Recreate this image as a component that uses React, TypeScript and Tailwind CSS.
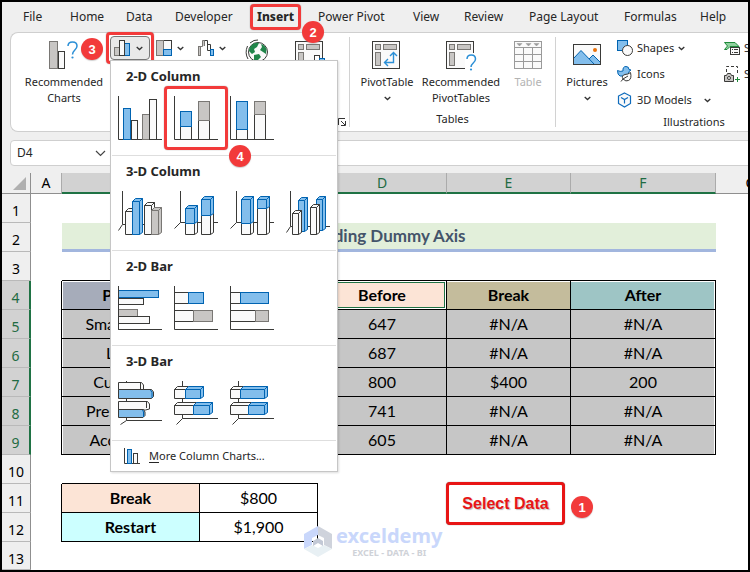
import type { ReactNode } from 'react';
import clsx from 'clsx';

const BLUE = '#83beec';
const BLUE_LINE = '#0063b1';
const GRAY = '#c8c6c4';
const GRAY_LINE = '#797774';
const WHITE = '#fafafa';
const DARK = '#3a3a38';

type Tone = 'blue' | 'gray' | 'white';

const tones: Record<Tone, { fill: string; stroke: string }> = {
  blue: { fill: BLUE, stroke: BLUE_LINE },
  gray: { fill: GRAY, stroke: GRAY_LINE },
  white: { fill: WHITE, stroke: DARK },
};

interface BoxProps {
  x: number;
  y: number;
  w: number;
  h: number;
  tone: Tone;
}

function Box({ x, y, w, h, tone }: BoxProps) {
  return <rect x={x + 0.5} y={y + 0.5} width={w} height={h} {...tones[tone]} />;
}

// Box with a small top and right face
function Box3D({ x, y, w, h, tone, top = true, side = true }: BoxProps & { top?: boolean; side?: boolean }) {
  const l = x + 0.5;
  const t = y + 0.5;
  const r = l + w;
  const b = t + h;
  return (
    <g {...tones[tone]} strokeLinejoin="round">
      <rect x={l} y={t} width={w} height={h} />
      {top && <path d={`M${l} ${t}l3 -3H${r + 3}l-3 3z`} />}
      {side && <path d={`M${r} ${t}l3 -3V${b - 2}l-3 2z`} />}
    </g>
  );
}

function ChartIcon({ axis, children }: { axis: string; children: ReactNode }) {
  return (
    <svg width="44" height="44" viewBox="0 0 44 44" fill="none" stroke={DARK} className="block">
      <path d={axis} />
      {children}
    </svg>
  );
}

const FLAT = 'M.5 0V43.5H44';

const sections: { title: string; icons: { name: string; icon: ReactNode }[] }[] = [
  {
    title: '2-D Column',
    icons: [
      {
        name: 'Clustered Column',
        icon: (
          <ChartIcon axis={FLAT}>
            <Box x={13} y={24} w={6} h={19} tone="white" />
            <Box x={5} y={12} w={7} h={31} tone="blue" />
            <Box x={24} y={18} w={7} h={25} tone="gray" />
            <Box x={31} y={3} w={7} h={40} tone="white" />
          </ChartIcon>
        ),
      },
      {
        name: 'Stacked Column',
        icon: (
          <ChartIcon axis={FLAT}>
            <Box x={6} y={30} w={11} h={13} tone="white" />
            <Box x={6} y={15} w={11} h={15} tone="blue" />
            <Box x={24} y={24} w={11} h={19} tone="white" />
            <Box x={24} y={5} w={11} h={19} tone="gray" />
          </ChartIcon>
        ),
      },
      {
        name: '100% Stacked Column',
        icon: (
          <ChartIcon axis={FLAT}>
            <Box x={6} y={33} w={11} h={10} tone="white" />
            <Box x={6} y={5} w={11} h={28} tone="blue" />
            <Box x={24} y={18} w={11} h={25} tone="white" />
            <Box x={24} y={5} w={11} h={13} tone="gray" />
          </ChartIcon>
        ),
      },
    ],
  },
  {
    title: '3-D Column',
    icons: [
      {
        name: '3-D Clustered Column',
        icon: (
          <ChartIcon axis="M4.5 0V33.5H44M4.5 33.5L.5 39.5">
            <Box3D x={7} y={20} w={7} h={23} tone="white" />
            <Box3D x={14} y={10} w={7} h={33} tone="blue" />
            <Box3D x={26} y={14} w={7} h={29} tone="white" />
            <Box3D x={33} y={19} w={7} h={24} tone="gray" />
          </ChartIcon>
        ),
      },
      {
        name: '3-D Stacked Column',
        icon: (
          <ChartIcon axis="M6.5 0V31.5H44M6.5 31.5L.5 37.5">
            <Box3D x={11} y={32} w={9} h={11} tone="white" top={false} />
            <Box3D x={11} y={17} w={9} h={15} tone="blue" />
            <Box3D x={27} y={24} w={9} h={19} tone="white" top={false} />
            <Box3D x={27} y={8} w={9} h={16} tone="blue" />
          </ChartIcon>
        ),
      },
      {
        name: '3-D 100% Stacked Column',
        icon: (
          <ChartIcon axis="M6.5 0V31.5H44M6.5 31.5L.5 37.5">
            <Box3D x={11} y={32} w={9} h={11} tone="white" top={false} />
            <Box3D x={11} y={8} w={9} h={24} tone="blue" />
            <Box3D x={27} y={17} w={9} h={26} tone="white" top={false} />
            <Box3D x={27} y={8} w={9} h={9} tone="blue" />
          </ChartIcon>
        ),
      },
      {
        name: '3-D Column',
        icon: (
          <ChartIcon axis="M4.5 0V35.5H44M4.5 35.5L.5 41.5">
            <Box3D x={12} y={9} w={6} h={31} tone="blue" />
            <Box3D x={6} y={22} w={6} h={21} tone="white" />
            <Box3D x={30} y={8} w={6} h={31} tone="blue" />
            <Box3D x={24} y={16} w={6} h={27} tone="white" />
          </ChartIcon>
        ),
      },
    ],
  },
  {
    title: '2-D Bar',
    icons: [
      {
        name: 'Clustered Bar',
        icon: (
          <ChartIcon axis={FLAT}>
            <Box x={0} y={12} w={25} h={6} tone="white" />
            <Box x={0} y={4} w={40} h={7} tone="blue" />
            <Box x={0} y={23} w={19} h={7} tone="gray" />
            <Box x={0} y={30} w={31} h={7} tone="white" />
            <path d={FLAT} />
          </ChartIcon>
        ),
      },
      {
        name: 'Stacked Bar',
        icon: (
          <ChartIcon axis={FLAT}>
            <Box x={0} y={6} w={14} h={11} tone="white" />
            <Box x={14} y={6} w={15} h={11} tone="blue" />
            <Box x={0} y={24} w={19} h={11} tone="white" />
            <Box x={19} y={24} w={19} h={11} tone="gray" />
          </ChartIcon>
        ),
      },
      {
        name: '100% Stacked Bar',
        icon: (
          <ChartIcon axis={FLAT}>
            <Box x={0} y={6} w={10} h={11} tone="white" />
            <Box x={10} y={6} w={28} h={11} tone="blue" />
            <Box x={0} y={24} w={25} h={11} tone="white" />
            <Box x={25} y={24} w={13} h={11} tone="gray" />
          </ChartIcon>
        ),
      },
    ],
  },
  {
    title: '3-D Bar',
    icons: [
      {
        name: '3-D Clustered Bar',
        icon: (
          <ChartIcon axis="M8.5 0V39.5H44M8.5 39.5L2.5 43.5">
            <path d="M.5 1.5H23.5L25.5 4V8.500H.5z" fill={WHITE} />
            <path d="M22.5 1.5V8" />
            <path d="M.5 8.5H33.5L35.5 11V15.5L33.5 17.5H.5z" fill={BLUE} />
            <path d="M32.5 9L34 11.5V17" stroke={BLUE_LINE} />
            <path d="M.5 20.5H29.5L31.5 23V28L27.5 29H.5z" fill={WHITE} />
            <path d="M28.5 21V27" />
            <path d="M.5 28.5H25.5L27 31V34.5L25 36.5H.5z" fill={BLUE} />
            <path d="M24.5 29L25.5 31V36" stroke={BLUE_LINE} />
          </ChartIcon>
        ),
      },
      {
        name: '3-D Stacked Bar',
        icon: (
          <ChartIcon axis="M8.5 0V37.5H44M8.5 37.5L2.5 43.5">
            <Box3D x={0} y={8} w={11} h={9} tone="white" side={false} />
            <Box3D x={11} y={8} w={15} h={9} tone="blue" />
            <Box3D x={0} y={24} w={19} h={9} tone="white" side={false} />
            <Box3D x={19} y={24} w={16} h={9} tone="blue" />
          </ChartIcon>
        ),
      },
      {
        name: '3-D 100% Stacked Bar',
        icon: (
          <ChartIcon axis="M8.5 0V37.5H44M8.5 37.5L2.5 43.5">
            <Box3D x={0} y={8} w={10} h={9} tone="white" side={false} />
            <Box3D x={10} y={8} w={24} h={9} tone="blue" />
            <Box3D x={0} y={24} w={18} h={9} tone="white" side={false} />
            <Box3D x={18} y={24} w={16} h={9} tone="blue" />
          </ChartIcon>
        ),
      },
    ],
  },
];

function Chevron() {
  return (
    <svg width="7" height="5" viewBox="0 0 7 5" fill="none" stroke="#333" strokeWidth="1.3" className="shrink-0">
      <path d="M.7 1L3.5 3.6L6.3 1" />
    </svg>
  );
}

function Badge({ children, className }: { children: ReactNode; className: string }) {
  return (
    <span
      className={clsx(
        'absolute z-20 flex size-[22px] items-center justify-center rounded-full bg-[#f23a3a] font-["Liberation_Sans",sans-serif] text-[13px] leading-none font-bold text-white shadow-[0_1px_1px_#8886]',
        className,
      )}
    >
      {children}
    </span>
  );
}

function Frame({ className }: { className: string }) {
  return (
    <span
      className={clsx(
        'pointer-events-none absolute z-10 rounded-sm border-3 border-[#f23a3a] shadow-[0_0_1px_#666]',
        className,
      )}
    />
  );
}

function PivotIcon({ children }: { children: ReactNode }) {
  return (
    <svg width="31" height="30" viewBox="0 0 31 30" fill="none">
      <rect x=".5" y=".5" width="27" height="27" fill={WHITE} stroke={DARK} />
      <g fill={GRAY} stroke={GRAY_LINE}>
        <rect x="3.5" y="3.5" width="5" height="5" />
        <rect x="11.5" y="3.5" width="13" height="5" />
        <rect x="3.5" y="11.5" width="5" height="13" />
      </g>
      {children}
    </svg>
  );
}

interface BigButtonProps {
  icon: ReactNode;
  lines: string[];
  chevron?: boolean;
  disabled?: boolean;
  className: string;
}

function BigButton({ icon, lines, chevron, disabled, className }: BigButtonProps) {
  return (
    <button
      type="button"
      disabled={disabled}
      className={clsx('flex shrink-0 flex-col items-center pt-2 text-[11px] leading-4 disabled:text-[#b3b3b3]', className)}
    >
      <span className="flex h-[33px] items-start">{icon}</span>
      {lines.map((line) => (
        <span key={line} className="whitespace-nowrap">
          {line}
        </span>
      ))}
      {chevron && (
        <span className="flex h-4 items-center">
          <Chevron />
        </span>
      )}
    </button>
  );
}

function SmallButton({ icon, label, chevron }: { icon: ReactNode; label: string; chevron?: string }) {
  return (
    <button type="button" className="flex h-[26px] items-center gap-1 text-[11px] whitespace-nowrap">
      {icon}
      {label}
      {chevron && (
        <span className={chevron}>
          <Chevron />
        </span>
      )}
    </button>
  );
}

function ChartMenu() {
  return (
    <div
      role="menu"
      className="absolute top-full left-0 z-10 w-[228px] border border-[#c6c6c6] bg-white px-px text-[#262626] shadow-[1px_1px_2px_#0002]"
    >
      {sections.map((section) => (
        <section key={section.title} className="border-b border-[#dedede] px-1.5 pt-[7px] pb-[15px]">
          <h2 className="mb-3 px-2 text-[13px] leading-4 font-bold">{section.title}</h2>
          <div className="flex gap-3">
            {section.icons.map(({ name, icon }) => (
              <button key={name} type="button" aria-label={name} className="relative">
                {icon}
                {name === 'Stacked Column' && (
                  <>
                    <Frame className="-inset-[10px]" />
                    <Badge className="top-[49px] left-[55px]">4</Badge>
                  </>
                )}
              </button>
            ))}
          </div>
        </section>
      ))}
      <button type="button" className="flex h-[30px] w-full items-center gap-2 px-3 text-[11px]">
        <svg width="17" height="16" viewBox="0 0 17 16" fill="none" stroke={DARK}>
          <path d="M.5 0V15.5H16" />
          <Box x={9} y={5} w={4} h={10} tone="white" />
          <Box x={3} y={1} w={4} h={14} tone="blue" />
        </svg>
        <span>
          <span className="underline underline-offset-2">M</span>ore Column Charts...
        </span>
      </button>
    </div>
  );
}

const tabs = [
  'File',
  'Home',
  'Data',
  'Developer',
  'Insert',
  'Power Pivot',
  'View',
  'Review',
  'Page Layout',
  'Formulas',
  'Help',
];

function TabBar() {
  return (
    <nav className="grid h-[30px] grid-cols-[47fr_56fr_49fr_82fr_61fr_95fr_51fr_65fr_95fr_76fr_48fr] items-center pl-[21px] text-[12px]">
      {tabs.map((tab) => (
        <div key={tab} className="flex">
          <button
            type="button"
            className={clsx('relative leading-4 whitespace-nowrap', tab === 'Insert' && 'font-extrabold')}
          >
            {tab}
            {tab === 'Insert' && (
              <>
                <Frame className="-inset-x-[7px] -inset-y-[5px]" />
                <Badge className="top-3 -right-[30px]">2</Badge>
              </>
            )}
          </button>
        </div>
      ))}
    </nav>
  );
}

function Ribbon() {
  return (
    <div className="ml-2 flex h-[100px] rounded-l-lg border border-r-0 border-[#cfcfcf] bg-white">
      <div className="relative flex w-[338px] shrink-0 pl-[11px]">
        <BigButton
          className="w-[84px]"
          lines={['Recommended', 'Charts']}
          icon={
            <svg width="30" height="29" viewBox="0 0 30 29" fill="none">
              <Box x={0} y={0} w={8} h={27} tone="gray" />
              <Box x={9} y={10} w={6} h={17} tone="white" />
              <path d="M19 5C19 -.5 28 -.5 28 5C28 9 23.5 9 23.5 13.5" stroke="#2b8fd6" strokeWidth="1.5" />
              <circle cx="23.5" cy="16.5" r="1.1" fill="#2b8fd6" />
            </svg>
          }
        />
        <div className="ml-1 flex items-start pt-[3px]">
          <div className="relative">
            <button
              type="button"
              aria-label="Insert Column or Bar Chart"
              className="flex h-6 w-10 items-center gap-1.5 rounded-sm border border-[#777] bg-[#e9e9e9] pl-[3px]"
            >
              <svg width="16" height="16" viewBox="0 0 16 16">
                <Box x={0} y={7} w={5} h={8} tone="gray" />
                <Box x={10} y={3} w={5} h={12} tone="blue" />
                <Box x={5} y={0} w={5} h={15} tone="white" />
              </svg>
              <Chevron />
            </button>
            <Frame className="-inset-1" />
            <Badge className="top-0.5 -left-[29px]">3</Badge>
            <ChartMenu />
          </div>
          <button
            type="button"
            aria-label="Insert Hierarchy Chart"
            className="flex h-6 w-[42px] items-center gap-[5px] pl-1.5"
          >
            <svg width="16" height="16" viewBox="0 0 16 16">
              <Box x={7} y={0} w={8} h={9} tone="white" />
              <Box x={0} y={0} w={7} h={15} tone="gray" />
              <Box x={7} y={9} w={8} h={6} tone="blue" />
            </svg>
            <Chevron />
          </button>
          <button
            type="button"
            aria-label="Insert Waterfall Chart"
            className="flex h-6 w-[42px] items-center gap-[5px] pl-1.5"
          >
            <svg width="16" height="16" viewBox="0 0 16 16">
              <Box x={0} y={6} w={2} h={9} tone="gray" />
              <path d="M2.5 6.5H4.5V.5H6.5V6" fill={GRAY} stroke={GRAY_LINE} />
              <path d="M6.5 .5H9.5V10.5H12.5V4.5H9.5" fill={WHITE} stroke={DARK} />
              <Box x={12} y={9} w={3} h={6} tone="blue" />
            </svg>
            <Chevron />
          </button>
        </div>
        <button type="button" aria-label="Maps" className="ml-[10px] flex items-start pt-1.5">
          <svg width="28" height="28" viewBox="0 0 28 28" fill="none">
            <circle cx="14" cy="13" r="9.5" fill={WHITE} stroke={DARK} />
            <path d="M9 5Q12 3 15 4L13 8L10 10L11 13L8 15L5 12Q5 8 9 5z" fill="#21854a" />
            <path d="M17 5Q21 6 22.5 10L22 15L19 13L16 11L18 8z" fill="#21854a" />
            <path d="M10 16L15 15L17 18L13 22L10 21z" fill="#21854a" />
            <path d="M6 4Q10 .5 14 1M3.5 7Q.5 14 4 20" stroke={DARK} />
          </svg>
        </button>
        <button type="button" aria-label="PivotChart" className="ml-[23px] flex items-start pt-2">
          <PivotIcon>
            <rect x="19.5" y="14.5" width="5" height="12" fill="#fff" stroke={DARK} />
            <rect x="24.5" y="17.5" width="5" height="9" fill={BLUE} stroke={BLUE_LINE} />
          </PivotIcon>
        </button>
        <button type="button" aria-label="Charts dialog" className="absolute right-[3px] bottom-[5px]">
          <svg width="8" height="8" viewBox="0 0 8 8" fill="none" stroke="#333">
            <path d="M.5 7V.5H7M3 3L7 7M7.5 3V7.5H3" />
          </svg>
        </button>
      </div>

      <div className="my-1 flex w-[207px] shrink-0 flex-col border-x border-[#d2d2d2]">
        <div className="-mt-1 flex h-[81px] gap-0.5 pl-2">
          <BigButton
            className="w-[58px]"
            lines={['PivotTable']}
            chevron
            icon={
              <PivotIcon>
                <path
                  d="M21.5 12V21.5H12.5M18 15L21.5 11.5L25 15M16 18L12.5 21.5L16 25"
                  stroke="#2b8fd6"
                  strokeWidth="1.4"
                />
              </PivotIcon>
            }
          />
          <BigButton
            className="w-[86px]"
            lines={['Recommended', 'PivotTables']}
            icon={
              <PivotIcon>
                <path d="M19 12H29V29H19z" fill="#fff" />
                <path d="M21 18C21 12.5 29.5 12.5 29.5 18C29.5 22 25 22 25 26" stroke="#2b8fd6" strokeWidth="1.5" />
                <circle cx="25" cy="28.5" r="1.1" fill="#2b8fd6" />
              </PivotIcon>
            }
          />
          <BigButton
            className="w-[44px]"
            lines={['Table']}
            disabled
            icon={
              <svg width="28" height="28" viewBox="0 0 28 28" fill="#fafafa" stroke="#9a9a9a">
                <rect x=".5" y=".5" width="27" height="27" />
                <path d="M.5 6.5H27.5M.5 13.5H27.5M.5 20.5H27.5M9.5 6.5V27.5M18.5 6.5V27.5" />
                <path d="M3 2.5H8L5.5 5zM12 2.5H17L14.5 5zM20 2.5H25L22.5 5z" fill="#9a9a9a" strokeWidth=".5" />
              </svg>
            }
          />
        </div>
        <div className="text-center text-[11px] leading-4">Tables</div>
      </div>

      <div className="flex w-[276px] shrink-0 flex-col">
        <div className="flex h-[81px]">
          <BigButton
            className="ml-1.5 w-[50px]"
            lines={['Pictures']}
            chevron
            icon={
              <svg width="28" height="24" viewBox="0 0 28 24" fill="none" className="mt-[3px]">
                <rect x=".5" y=".5" width="27" height="20" fill={WHITE} />
                <path d="M1 14L8 6.5L21.5 20.5H1z" fill={BLUE} />
                <path d="M16 15L20 11L27 18V20.5H21z" fill={BLUE} />
                <path d="M1 14L8 6.5L21.5 20.5M16 15L20 11L27 18" stroke={BLUE_LINE} />
                <rect x=".5" y=".5" width="27" height="20" stroke={DARK} />
                <circle cx="22" cy="6" r="2" fill="#e8710a" />
              </svg>
            }
          />
          <div className="ml-[5px] flex w-[107px] flex-col pt-0.5">
            <SmallButton
              label="Shapes"
              chevron="ml-0"
              icon={
                <svg width="16" height="16" viewBox="0 0 16 16">
                  <rect x=".5" y=".5" width="10" height="10" fill={BLUE} stroke={BLUE_LINE} />
                  <circle cx="10.5" cy="10.5" r="5" fill={WHITE} stroke={DARK} />
                </svg>
              }
            />
            <SmallButton
              label="Icons"
              icon={
                <svg width="16" height="16" viewBox="0 0 16 16">
                  <path
                    d="M.5 4.5Q3 6 6 5Q5.500 .5 9 .5Q12 .5 12 3.5L14 4L12 5.5Q12 9 9 10H3Q.5 9 .5 4.5z"
                    fill={BLUE}
                    stroke={BLUE_LINE}
                  />
                  <path
                    d="M4 15.5L6 13Q4 9.5 8 8.5Q11 8.5 13.5 6.5Q15 13 11.5 14.5Q9 16 6 13L11 10"
                    fill={WHITE}
                    stroke={DARK}
                  />
                </svg>
              }
            />
            <SmallButton
              label="3D Models"
              chevron="ml-2"
              icon={
                <svg width="16" height="16" viewBox="0 0 16 16" fill="none" stroke="#0f6cbd" strokeWidth="1.2">
                  <path d="M7.5 1L13.5 4V11.5L7.5 15L1.5 11.5V4z" fill={WHITE} />
                  <path d="M4 5.5L7.5 7.5L11 5.5M7.5 7.5V11.5" />
                </svg>
              }
            />
          </div>
          <div className="flex flex-col pt-0.5">
            <SmallButton
              label="SmartArt"
              icon={
                <svg width="16" height="16" viewBox="0 0 16 16">
                  <path d="M.5 2.5H11L15 6.5H6L3 9.5H.5L3.5 6z" fill="#8fd19e" stroke="#1f8a3b" />
                  <rect x="6.5" y="7.5" width="9" height="7" fill={WHITE} stroke={DARK} />
                  <path d="M8 9.5H9M10 9.5H14M8 12.5H9M10 12.5H14" stroke={DARK} />
                </svg>
              }
            />
            <SmallButton
              label="Screenshot"
              icon={
                <svg width="16" height="16" viewBox="0 0 16 16">
                  <path d="M2.5 6V.5H13.5V9" fill="none" stroke={DARK} strokeDasharray="3 2" />
                  <path d="M.5 9.5H2.5L3.5 7.5H6.5L7.5 9.5H9.5V15.5H.5z" fill={GRAY} stroke={DARK} />
                  <circle cx="5" cy="12" r="1.5" fill={WHITE} stroke={DARK} />
                  <path d="M11 13.5H16M13.5 11V16" stroke="#1f8a3b" />
                </svg>
              }
            />
          </div>
        </div>
        <div className="text-center text-[11px] leading-4">Illustrations</div>
      </div>
    </div>
  );
}

function FormulaBar() {
  return (
    <div className="mt-2 mb-[7px] ml-2 flex h-[26px] gap-2 text-[12px]">
      <label className="flex w-[105px] items-center rounded-sm border border-[#cfcfcf] bg-white pr-2 pl-1.5">
        <input aria-label="Name Box" defaultValue="D4" className="w-0 grow outline-none" />
        <svg width="11" height="7" viewBox="0 0 11 7" fill="none" stroke="#444" strokeWidth="1.2">
          <path d="M1 1L5.5 5.5L10 1" />
        </svg>
      </label>
      <input aria-label="Formula Bar" className="grow border border-r-0 border-[#cfcfcf] bg-white outline-none" />
    </div>
  );
}

const columns = ['A', 'B', 'C', 'D', 'E', 'F', 'G'];
const selectedColumns = ['B', 'C', 'D', 'E', 'F'];

const header = ['Product', '', 'Before', 'Break', 'After'];
const headerFill = ['bg-[#a6acba]', 'bg-[#c6c6c6]', 'bg-[#fce4d6]', 'bg-[#c4bc9c]', 'bg-[#9ec5c5]'];

const data = [
  ['Smart Phone', '', '647', '#N/A', '#N/A'],
  ['Laptop', '', '687', '#N/A', '#N/A'],
  ['Curved TV', '', '800', '$400', '200'],
  ['Presentation', '', '741', '#N/A', '#N/A'],
  ['Accessories', '', '605', '#N/A', '#N/A'],
];

function RowHead({ n }: { n: number }) {
  const selected = n >= 4 && n <= 9;
  return (
    <th
      scope="row"
      className={clsx(
        'border-b border-b-[#b9b9b9] pt-1.5 font-["Noto_Sans",sans-serif] text-[14px] leading-5 font-normal',
        selected ? 'border-r-2 border-r-[#1f7244] bg-[#d2d2d2] text-[#1f6b43]' : 'border-r border-r-[#8f8f8f] bg-[#efefef]',
      )}
    >
      {n}
    </th>
  );
}

function Sheet() {
  return (
    <div className="relative">
      <table className="w-full table-fixed border-separate border-spacing-0 bg-white text-center font-[Lato,sans-serif] text-[16px] leading-5 text-black">
        <colgroup>
          <col className="w-[29px]" />
          <col className="w-[31px]" />
          <col className="w-[138px]" />
          <col className="w-[118px]" />
          <col className="w-[129px]" />
          <col className="w-[124px]" />
          <col className="w-[145px]" />
          <col className="w-[70px]" />
        </colgroup>
        <thead>
          <tr className="h-[21px] font-['Noto_Sans',sans-serif] text-[14px] leading-[18px]">
            <td className="border-r border-b border-[#8f8f8f] bg-[#efefef]">
              <svg width="13" height="13" viewBox="0 0 13 13" className="ml-[11px]">
                <path d="M13 0V13H0z" fill="#b0b0b0" />
              </svg>
            </td>
            {columns.map((col) => (
              <th
                key={col}
                scope="col"
                className={clsx(
                  'border-r border-r-[#ababab] font-normal',
                  selectedColumns.includes(col)
                    ? 'border-b-2 border-b-[#1f7244] bg-[#d2d2d2] text-[#1f6b43]'
                    : 'border-b border-b-[#8f8f8f] bg-[#efefef]',
                )}
              >
                {col}
              </th>
            ))}
          </tr>
        </thead>
        <tbody>
          <tr className="h-[29px]">
            <RowHead n={1} />
            <td colSpan={7} />
          </tr>
          <tr className="h-[29px]">
            <RowHead n={2} />
            <td />
            <td colSpan={5} className="border-b-3 border-[#a2b6de] bg-[#e2efda] text-[17px] font-bold text-[#44546a]">
              Adding Dummy Axis
            </td>
            <td />
          </tr>
          <tr className="h-[29px]">
            <RowHead n={3} />
            <td />
            <td colSpan={5} className="border-b border-black" />
            <td />
          </tr>
          <tr className="h-[29px]">
            <RowHead n={4} />
            <td className="border-r border-black" />
            {header.map((text, i) => (
              <th
                key={i}
                scope="col"
                className={clsx(
                  'border-r border-b border-black font-bold',
                  headerFill[i],
                  i === 0 && 'shadow-[inset_1px_1px_#fff]',
                  i === 2 && 'shadow-[inset_0_0_0_1px_#fff,inset_0_0_0_2px_#1f7244]',
                  i === 3 && 'shadow-[inset_0_1px_#fff]',
                  i === 4 && 'shadow-[inset_-1px_1px_#fff]',
                )}
              >
                {text}
              </th>
            ))}
            <td />
          </tr>
          {data.map((row, r) => (
            <tr key={r} className="h-[29px]">
              <RowHead n={r + 5} />
              <td className="border-r border-black" />
              {row.map((text, i) => (
                <td
                  key={i}
                  className={clsx(
                    'border-r border-b border-black bg-[#c6c6c6]',
                    i === 0 && 'shadow-[inset_1px_0_#fff]',
                    i === 4 && 'shadow-[inset_-1px_0_#fff]',
                  )}
                >
                  {text}
                </td>
              ))}
              <td />
            </tr>
          ))}
          <tr className="h-[29px]">
            <RowHead n={10} />
            <td />
            <td colSpan={2} className="border-b border-black" />
            <td colSpan={4} />
          </tr>
          <tr className="h-[29px]">
            <RowHead n={11} />
            <td className="border-r border-black" />
            <th className="border-r border-b border-black bg-[#fce4d6] font-bold">Break</th>
            <td className="border-r border-b border-black">$800</td>
            <td colSpan={4} />
          </tr>
          <tr className="h-[29px]">
            <RowHead n={12} />
            <td className="border-r border-black" />
            <th className="border-r border-b border-black bg-[#ccffff] font-bold">Restart</th>
            <td className="border-r border-b border-black">$1,900</td>
            <td colSpan={4} />
          </tr>
          <tr className="h-7">
            <RowHead n={13} />
            <td colSpan={7} />
          </tr>
        </tbody>
      </table>

      <div className="absolute top-[309px] left-[444px] flex h-[43px] w-[119px] items-center justify-center rounded-sm border-3 border-[#e81515] bg-white font-['Liberation_Sans',sans-serif] text-[16px] font-bold whitespace-nowrap text-[#e81515] shadow-[0_0_1px_#666] text-shadow-[1px_1px_1px_#0004]">
        Select Data
      </div>
      <Badge className="top-[323px] left-[569px]">1</Badge>

      <div className="absolute top-[351px] left-[302px] flex items-center gap-1">
        <svg width="28" height="31" viewBox="0 0 28 31">
          <path d="M14 0L28 8V23L20 19V12L14 9z" fill="#cfd3dc" />
          <path d="M14 0V9L8 12V19L0 23V8z" fill="#c9d7fb" />
          <path d="M0 23L8 19L14 22L20 19L28 23L14 31z" fill="#e8f0f4" />
          <path d="M14 12L19 15V20L14 17L9 20V15z" fill="#c3c9d6" />
        </svg>
        <div className="flex flex-col items-center">
          <span className="text-[20px] leading-6 font-bold text-[#c9d7fb]">exceldemy</span>
          <span className="text-[9px] leading-[10px] font-bold text-[#cfd2d8]">EXCEL - DATA - BI</span>
        </div>
      </div>
    </div>
  );
}

export default function App() {
  return (
    <div className="min-h-screen overflow-hidden border-2 border-black bg-[#efefef] font-['Noto_Sans','Open_Sans',sans-serif] text-[#262626]">
      <TabBar />
      <Ribbon />
      <FormulaBar />
      <Sheet />
    </div>
  );
}
